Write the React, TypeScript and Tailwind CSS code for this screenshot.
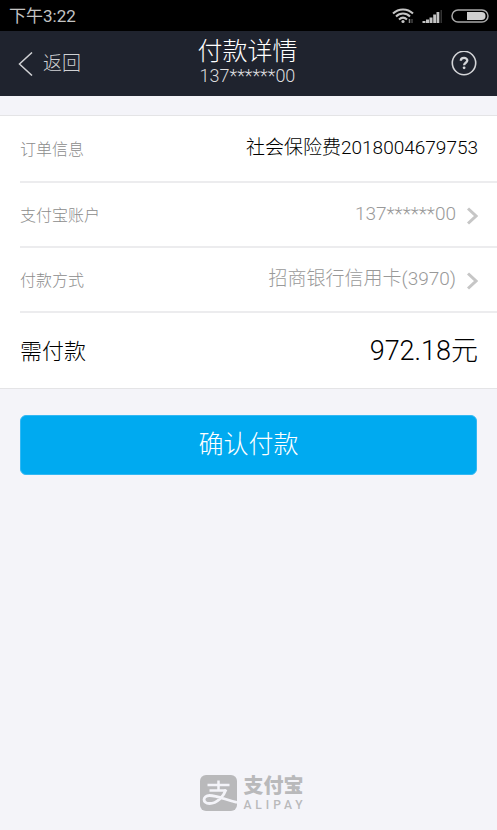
interface DetailRow {
  label: string;
  value: string;
  link?: boolean;
}

const rows: DetailRow[] = [
  { label: "订单信息", value: "社会保险费2018004679753" },
  { label: "支付宝账户", value: "137******00", link: true },
  { label: "付款方式", value: "招商银行信用卡(3970)", link: true },
];

function StatusBar() {
  return (
    <div className="flex h-[31px] items-center justify-between bg-black pt-px pl-[9px] pr-2 text-[#c4c4c4]">
      <span className="text-[17px] leading-6 font-normal">下午3:22</span>
      <div className="flex items-center gap-2">
        {/* Wifi */}
        <svg width="22" height="16" viewBox="0 0 22 16" fill="none" stroke="currentColor" strokeWidth="2">
          <path d="M1 5.5C6.5 0 15.5 0 21 5.5" />
          <path d="M4 8.5C8 4.5 14 4.5 18 8.5" />
          <path d="M7 11.5C9.5 9.2 12.5 9.2 15 11.5" />
          <circle cx="11" cy="13.5" r="1.6" fill="currentColor" stroke="none" />
          <path d="M17.5 11v4" stroke="#8a8a8a" strokeWidth="1.5" />
          <path d="M20 11v4" stroke="#444" strokeWidth="1.5" />
        </svg>
        {/* Signal */}
        <svg width="21" height="14" viewBox="0 0 21 14" fill="currentColor">
          <path d="M0.5 12h3v2h-3zM4 10.5h3V14H4zM7.5 8.5h3V14h-3zM11.2 5.5h2.8V14h-2.8zM14.5 3h2.8v11h-2.8z" />
          <path d="M18.5 1H20v13h-1.5z" fill="#333" />
        </svg>
        {/* Battery */}
        <svg width="38" height="14" viewBox="0 0 38 14" fill="none">
          <rect x="1" y="1" width="36" height="12" rx="6" stroke="#a8a8a8" strokeWidth="1.5" />
          <path d="M16 3h14.5a4 4 0 0 1 0 8H16z" fill="#d0d0d0" />
        </svg>
      </div>
    </div>
  );
}

function Header() {
  return (
    <header className="grid h-[65px] grid-cols-[1fr_auto_1fr] items-center bg-[#1f232e] pl-[18px] pr-5">
      <button className="flex items-center gap-[10px] justify-self-start text-[19px] leading-6 font-light text-[#d0d1d4]">
        <svg width="15" height="24" viewBox="0 0 15 24" fill="none" stroke="currentColor" strokeWidth="1.5">
          <path d="M14 0.5L1.5 12L14 23.5" />
        </svg>
        返回
      </button>
      <div className="pb-1 text-center">
        <h1 className="text-[25px] leading-7 font-light text-white">付款详情</h1>
        <p className="text-[18px] leading-5 font-light text-[#dcdcde]">137******00</p>
      </div>
      <button aria-label="帮助" className="justify-self-end text-[#d4d5d8]">
        <svg width="26" height="26" viewBox="0 0 26 26" fill="none" stroke="currentColor">
          <circle cx="13" cy="12" r="11.700" strokeWidth="1.600" />
          <path d="M9.8 9.8C9.8 6 16.3 6 16.3 9.6C16.3 11.7 13.1 11.9 13.1 14.3" strokeWidth="2.300" />
          <circle cx="13.1" cy="16.8" r="1.4" fill="currentColor" stroke="none" />
        </svg>
      </button>
    </header>
  );
}

function Chevron() {
  return (
    <svg className="mt-1" width="11" height="18" viewBox="0 0 11 18" fill="none" stroke="#c6c6c6" strokeWidth="3">
      <path d="M1 1.5L9 9L1 16.5" />
    </svg>
  );
}

function AlipayMark() {
  return (
    <svg width="37" height="36" viewBox="0 0 37 36" fill="none" stroke="#f4f4f9">
      <rect width="37" height="36" rx="6" fill="currentColor" stroke="none" />
      <path d="M7.5 10H29.500M18.500 5.500V15M9.500 15.500H26" strokeWidth="2.500" />
      <path d="M26 14.500C24 21 17 28.500 9.500 28.500C2 28.500 2.500 20.500 9.500 20.500C17 20.500 25 24.500 37 27.500" strokeWidth="2.800" />
    </svg>
  );
}

function App() {
  return (
    <div className="flex min-h-screen flex-col bg-[#f4f4f9] font-[Roboto,'Noto_Sans_CJK_SC',sans-serif]">
      <StatusBar />
      <Header />

      <main>
        {/* Order details */}
        <section className="mt-[19px] border-y border-[#e4e4e6] bg-white">
          {rows.map((row) => (
            <div
              key={row.label}
              className="ml-5 flex h-[65px] items-center justify-between border-b-2 border-[#ececee] pr-[19px] pb-[2px] first:h-[67px]"
            >
              <span className="pt-1 text-[16px] leading-6 font-light text-[#8c8c8c]">{row.label}</span>
              {row.link ? (
                <button className="flex items-center gap-[11px] text-[19px] leading-6 font-light text-[#999]">
                  {row.value}
                  <Chevron />
                </button>
              ) : (
                <span className="text-[19px] leading-6 font-light text-black">{row.value}</span>
              )}
            </div>
          ))}
          <div className="flex h-[75px] items-center justify-between pl-5 pr-[19px] font-light text-black">
            <span className="pt-[2px] text-[22px] leading-8">需付款</span>
            <span className="text-[27px] leading-8">972.18元</span>
          </div>
        </section>

        <div className="px-5 pt-[26px]">
          <button className="h-[60px] w-full rounded-md border border-[#33b8f3] bg-[#00aaf0] text-[25px] leading-8 font-light text-white">
            确认付款
          </button>
        </div>
      </main>

      <footer className="mt-auto flex items-center justify-center gap-[6px] pb-[18px] pl-[10px] text-[#b9b9bb]">
        <AlipayMark />
        <div>
          <p className="text-[20px] leading-6 font-black">支付宝</p>
          <p className="text-[12px] leading-[14px] font-medium tracking-[4px]">ALIPAY</p>
        </div>
      </footer>
    </div>
  );
}

export default App;
